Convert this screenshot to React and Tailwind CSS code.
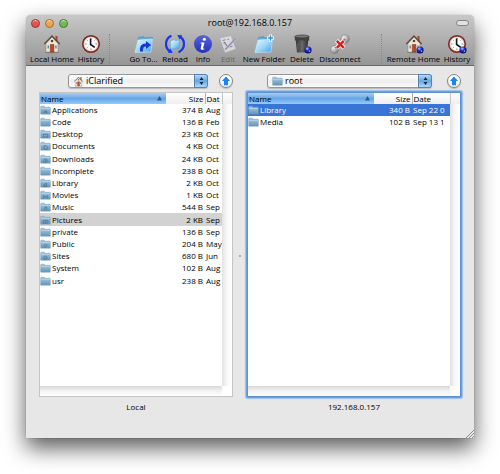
import { clsx } from 'clsx';

const localFiles = [
    { name: 'Applications', size: '374 B', date: 'Aug', glyph: 'apps' },
    { name: 'Code', size: '136 B', date: 'Feb' },
    { name: 'Desktop', size: '23 KB', date: 'Oct', glyph: 'desktop' },
    { name: 'Documents', size: '4 KB', date: 'Oct', glyph: 'doc' },
    { name: 'Downloads', size: '24 KB', date: 'Oct', glyph: 'down' },
    { name: 'Incomplete', size: '238 B', date: 'Oct' },
    { name: 'Library', size: '2 KB', date: 'Oct', glyph: 'library' },
    { name: 'Movies', size: '1 KB', date: 'Oct', glyph: 'film' },
    { name: 'Music', size: '544 B', date: 'Sep', glyph: 'music' },
    { name: 'Pictures', size: '2 KB', date: 'Sep', glyph: 'camera', selected: true },
    { name: 'private', size: '136 B', date: 'Sep' },
    { name: 'Public', size: '204 B', date: 'May', glyph: 'public' },
    { name: 'Sites', size: '680 B', date: 'Jun', glyph: 'compass' },
    { name: 'System', size: '102 B', date: 'Aug' },
    { name: 'usr', size: '238 B', date: 'Aug' },
];

const remoteFiles = [
    { name: 'Library', size: '340 B', date: 'Sep 22 0', selected: true },
    { name: 'Media', size: '102 B', date: 'Sep 13 1' },
];

const glyphs = {
    apps: <path d="M6 11.500 8 7l2 4.500M5 10h6" />,
    desktop: <path d="M5 7.500h6v4H5z" />,
    doc: <path d="M6 6.500h3l1.500 1.500v4H6z" />,
    down: <><circle cx="8" cy="9.500" r="2.500" /><path d="M8 8v3" /></>,
    library: <path d="M5.500 12V8M7.500 12V7M9.500 12V7M5 12h6" />,
    film: <path d="M5.500 7v5M10.500 7v5M5.500 9.500h5" />,
    music: <path d="M7 11.500V7l3 .5v3.500" />,
    camera: <><path d="M4.500 7.500h7v4h-7z" /><circle cx="8" cy="9.500" r="1" /></>,
    public: <path d="M8 7l2.500 2.500L8 12 5.500 9.500z" />,
    compass: <><circle cx="8" cy="9.500" r="2.500" /><path d="M7 10.500l2-2" /></>,
};

const Gradients = () => (
    <svg className="absolute h-0 w-0" aria-hidden="true">
        <defs>
            <linearGradient id="folder" x1="0" y1="0" x2="0" y2="1">
                <stop offset="0" stopColor="#a5c9df" />
                <stop offset="1" stopColor="#6796b8" />
            </linearGradient>
            <linearGradient id="sky" x1="0" y1="0" x2="1" y2="1">
                <stop offset="0" stopColor="#e6f8ff" />
                <stop offset="0.5" stopColor="#a0d9f8" />
                <stop offset="1" stopColor="#3b9ce8" />
            </linearGradient>
            <linearGradient id="info" x1="0" y1="0" x2="0" y2="1">
                <stop offset="0" stopColor="#5964d8" />
                <stop offset="1" stopColor="#2430bd" />
            </linearGradient>
            <linearGradient id="can" x1="0" y1="0" x2="1" y2="0">
                <stop offset="0" stopColor="#343434" />
                <stop offset="0.5" stopColor="#666" />
                <stop offset="1" stopColor="#303030" />
            </linearGradient>
            <radialGradient id="steel" cx="0.35" cy="0.3" r="0.8">
                <stop offset="0" stopColor="#f0f0f0" />
                <stop offset="1" stopColor="#777" />
            </radialGradient>
            <radialGradient id="globe" cx="0.4" cy="0.3" r="0.7">
                <stop offset="0" stopColor="#788cff" />
                <stop offset="0.5" stopColor="#1825b0" />
                <stop offset="1" stopColor="#070c60" />
            </radialGradient>
        </defs>
    </svg>
);

const FolderIcon = ({ glyph, className }) => (
    <svg viewBox="0 0 16 14" className={className} aria-hidden="true">
        <path d="M1 2.500q0-1 1-1h4l1.500 1.500H14q1 0 1 1V13H1z" fill="url(#folder)" stroke="#6d98b5" strokeWidth="0.7" />
        <path d="M1 5h14" stroke="#c2dceb" strokeWidth="1" />
        <g fill="none" stroke="#43749a" strokeWidth="1">{glyph && glyphs[glyph]}</g>
    </svg>
);

const Globe = () => (
    <>
        <circle cx="16" cy="16" r="3.600" fill="url(#globe)" />
        <path d="M14 14.500l2-1 .5 1.500-1.500 1zM16.500 17l1.500-1 .3 1.200-1 1z" fill="#8ca4fa" />
    </>
);

const House = () => (
    <>
        <ellipse cx="10" cy="18.300" rx="7" ry="1" fill="#555" opacity="0.45" />
        <path d="M13.500 2h2v6h-2z" fill="#a8452b" />
        <path d="M4 9.500 10 3l6 6.500V18H4z" fill="#eee6d8" stroke="#8a7a68" strokeWidth="0.5" />
        <path d="M2.300 10 10 2l7.700 8" fill="none" stroke="#5c4a3f" strokeWidth="1.300" />
        <circle cx="10" cy="7" r="1.300" fill="#634131" />
        <path d="M8.300 10.500h3.600V18H8.300z" fill="#c5491d" stroke="#6b2c16" strokeWidth="0.5" />
        <path d="M5.500 11.500h1.500v3H5.500zM13.200 11.500h1.500v3h-1.500z" fill="#7189a0" />
    </>
);

const Clock = () => (
    <>
        <circle cx="10" cy="10" r="8.200" fill="#fafafa" stroke="#7c2b20" strokeWidth="1.700" />
        <circle cx="10" cy="10" r="7" fill="none" stroke="#d8a99d" strokeWidth="0.5" />
        <path d="M10 4v1.500M16 10h-1.500M10 16v-1.500M4 10h1.500M14.200 5.800l-.8.8M5.800 5.800l.8.8M5.800 14.200l.8-.8" stroke="#555" strokeWidth="0.7" />
        <path d="M9.600 4.500v6l4.200 2.800" fill="none" stroke="#151515" strokeWidth="1.600" />
    </>
);

const BlueFolder = () => (
    <>
        <path d="M2.500 18 4.500 3.500l5-1 1 1.500 8-.5-1.500 14z" fill="#5baee3" stroke="#397fb2" strokeWidth="0.5" />
        <path d="M1 18.500 4 6l14.500-1-1.500 13z" fill="url(#sky)" stroke="#bdeaff" strokeWidth="0.700" />
    </>
);

const toolIcons = {
    home: <House />,
    history: <Clock />,
    goto: (
        <>
            <BlueFolder />
            <path d="M6 17.500q-1-8 6-8V7l5 4-5 4v-2.500q-3.500 0-3 5z" fill="#1539d0" />
        </>
    ),
    reload: (
        <>
            <path d="M5.500 7l4-1.500.8 1 4.500-.5-1 8.500-8.500.5z" fill="url(#sky)" stroke="#579ccc" strokeWidth="0.500" />
            <path d="M6.500 1.800A8.800 8.800 0 0 0 5 17.300M13.500 18.200A8.800 8.800 0 0 0 15 2.700" fill="none" stroke="#1637ef" strokeWidth="2.300" />
            <path d="M2.800 18.800l5 .2-2.500-4.500zM17.200 1.200l-5-.2 2.500 4.500z" fill="#1637ef" />
        </>
    ),
    info: (
        <>
            <circle cx="10" cy="10" r="9" fill="url(#info)" />
            <circle cx="11.300" cy="5.200" r="1.500" fill="#fff" />
            <path d="M7.700 8.500h3.800l-1.400 5.500q0 1 1.500.4l-.2.8q-4 1.700-3.700-1l1.100-4.700H7.600z" fill="#fff" />
        </>
    ),
    edit: (
        <g opacity="0.7">
            <path d="M1.500 4 13 1.500 18 15 7 19z" fill="#ebebf0" stroke="#a6a6ae" strokeWidth="0.600" />
            <path d="M4.500 6.500l3-.7M9.500 5.500l1.500-.3M5.500 9l2-.5M11.500 13l3-.9" stroke="#6f6f98" strokeWidth="1" />
            <path d="M7 14.500 17.500 3l1.500 1.300L8.800 15.500l-2.500 1z" fill="#8c89b0" stroke="#eee" strokeWidth="0.400" />
            <path d="M6 8l3 4" stroke="#66669a" strokeWidth="1.200" />
        </g>
    ),
    newFolder: (
        <>
            <BlueFolder />
            <path d="M16.500 0.500v7M13 4h7" stroke="#fff" strokeWidth="3" />
            <path d="M16.500 1.300v5.400M13.800 4h5.400" stroke="#3a92cf" strokeWidth="1.400" />
        </>
    ),
    trash: (
        <>
            <path d="M3.500 4h13l-1.500 14.500H5z" fill="url(#can)" />
            <path d="M2.800 2.500h14.400v4H2.800z" fill="#424242" />
            <ellipse cx="10" cy="2.500" rx="7.200" ry="1.500" fill="#777" stroke="#333" strokeWidth="0.600" />
            <path d="M6 9v7M10 9v7" stroke="#737373" strokeWidth="0.600" />
            <Globe />
        </>
    ),
    disconnect: (
        <>
            <circle cx="15" cy="5" r="4.300" fill="url(#steel)" stroke="#777" strokeWidth="0.500" />
            <circle cx="4.500" cy="15.500" r="4" fill="url(#steel)" stroke="#777" strokeWidth="0.500" />
            <path d="M5 14l2-2M13 7l2-2" stroke="#777" strokeWidth="1.400" />
            <path d="M6.500 6.500l7.500 7.500M14 6.500 6.500 14" stroke="#fff" strokeWidth="4.200" />
            <path d="M6.800 6.800l7 7M13.800 6.800l-7 7" stroke="#d91c20" strokeWidth="2.500" />
        </>
    ),
    remoteHome: <><House /><Globe /></>,
    remoteHistory: <><Clock /><Globe /></>,
};

const Tool = ({ icon, label, width, disabled }) => (
    <button
        type="button"
        disabled={disabled}
        className={clsx('flex shrink-0 flex-col items-center whitespace-nowrap', width, disabled && 'text-[#686868]')}
    >
        <svg viewBox="0 0 20 20" className="h-5 w-5" aria-hidden="true">{toolIcons[icon]}</svg>
        <span className="text-[8px] leading-[10px]">{label}</span>
    </button>
);

const Separator = () => <span className="h-[30px] border-l border-dotted border-[#858585]" />;

const Light = ({ label, color }) => (
    <button
        type="button"
        aria-label={label}
        className={clsx('h-[9px] w-[9px] rounded-full border shadow-[inset_0_2px_1px_-1px_rgba(255,255,255,0.8)]', color)}
    />
);

const LocationBar = ({ value, label, icon, className }) => (
    <div className={clsx('flex h-[14px] items-stretch', className)}>
        <div className="relative flex min-w-0 flex-1">
            <select
                aria-label={label}
                className="w-full appearance-none rounded-[3px] border border-[#969696] bg-linear-to-b from-white via-[#eeeeee] to-[#fafafa] pl-[17px] text-[9px] leading-[12px] text-black shadow-[0_1px_1px_rgba(0,0,0,0.2)]"
            >
                <option>{value}</option>
            </select>
            <span className="pointer-events-none absolute inset-y-0 left-[5px] flex items-center">{icon}</span>
            <span className="pointer-events-none absolute inset-y-0 right-0 flex w-[14px] items-center justify-center rounded-r-[3px] border border-[#5382b5] bg-linear-to-b from-[#b8d7f5] via-[#65a6e3] to-[#acdafb]">
                <svg viewBox="0 0 6 10" className="h-2 w-[5px]" aria-hidden="true">
                    <path d="M3 0l2.500 3.700h-5zM3 10 .5 6.300h5z" fill="#15273d" />
                </svg>
            </span>
        </div>
        <button
            type="button"
            aria-label="Parent folder"
            className="flex w-[14px] shrink-0 items-center justify-center rounded-full border border-[#858585] bg-linear-to-b from-white to-[#f0f0f0] shadow-[0_1px_1px_rgba(0,0,0,0.2)]"
        >
            <svg viewBox="0 0 10 10" className="h-[10px] w-[10px]" aria-hidden="true">
                <path d="M5 .5 9 5H7v4.300H3V5H1z" fill="#1685fa" />
            </svg>
        </button>
    </div>
);

const FileList = ({ files, dateLabel, focused }) => (
    <div
        className={clsx(
            'flex min-h-0 flex-1 flex-col border bg-white',
            focused ? 'rounded-[1px] border-[#5b93d6] shadow-[0_0_0_1px_#6b9fdd,0_0_1px_2px_#9dbfe8]' : 'border-[#c4c4c4]'
        )}
    >
        <div className="flex flex-1">
            <div className="min-w-0 flex-1">
                <table className="w-full table-fixed text-left text-[8px] leading-[10px] whitespace-nowrap">
                    <colgroup>
                        <col />
                        <col className={focused ? 'w-[38px]' : 'w-[39px]'} />
                        <col className={focused ? 'w-[38px]' : 'w-[17px]'} />
                    </colgroup>
                    <thead>
                        <tr className="h-[11px]">
                            <th className="bg-linear-to-b from-[#a9cdf2] via-[#66a6e6] to-[#94caf8] p-0 pl-px font-medium">
                                <span className="flex items-center justify-between pr-1">
                                    Name
                                    <svg viewBox="0 0 6 6" className="h-[5px] w-[5px]" aria-hidden="true">
                                        <path d="M3 0l3 5.500H0z" fill="#355881" />
                                    </svg>
                                </span>
                            </th>
                            <th className="border-r border-[#b5b5b5] bg-linear-to-b from-white to-[#eeeeee] p-0 pr-px text-right font-medium">Size</th>
                            <th className="bg-linear-to-b from-white to-[#eeeeee] p-0 pl-px font-medium">{dateLabel}</th>
                        </tr>
                    </thead>
                    <tbody>
                        {files.map((file) => (
                            <tr
                                key={file.name}
                                className={clsx(
                                    'h-3 nth-[5n]:h-[13px]',
                                    file.selected && (focused ? 'bg-[#3875d7] text-white' : 'bg-[#d2d2d2]')
                                )}
                            >
                                <td className="p-0">
                                    <span className="flex items-center gap-px">
                                        <FolderIcon glyph={file.glyph} className="h-[10px] w-[11px]" />
                                        {file.name}
                                    </span>
                                </td>
                                <td className="p-0 pr-[2px] text-right">{file.size}</td>
                                <td className="p-0 pl-px">{file.date}</td>
                            </tr>
                        ))}
                    </tbody>
                </table>
            </div>
            <div className="flex w-[10px] flex-col">
                <div className="h-[11px] border-l border-[#c4c4c4] bg-linear-to-b from-white to-[#eeeeee]" />
                <div className="flex-1 bg-linear-to-r from-[#e2e2e2] via-[#f8f8f8] to-white" />
            </div>
        </div>
        <div className="mr-[10px] h-[10px] bg-linear-to-b from-[#d8d8d8] via-[#f2f2f2] to-white" />
    </div>
);

export default function App() {
    return (
        <div className="flex min-h-screen flex-col bg-white px-[26px] pt-[15px] pb-9 font-['Open_Sans','Noto_Sans',sans-serif] text-black">
            <Gradients />
            <main className="flex flex-1 flex-col rounded-t-[5px] bg-[#e7e7e7] shadow-[0_0_1px_rgba(0,0,0,0.5),0_10px_22px_rgba(0,0,0,0.65)]">
                <header className="rounded-t-[5px] border-b border-[#686868] bg-linear-to-b from-[#c8c8c8] to-[#969696]">
                    <div className="grid h-4 grid-cols-[1fr_auto_1fr] items-center px-[5px]">
                        <div className="flex items-center gap-[5px]">
                            <Light label="Close" color="border-[#983535] bg-[#e94d4d]" />
                            <Light label="Minimize" color="border-[#a36a2d] bg-[#f2a444]" />
                            <Light label="Zoom" color="border-[#457b31] bg-[#72b94f]" />
                        </div>
                        <h1 className="text-[9px] leading-3">root@192.168.0.157</h1>
                        <button
                            type="button"
                            aria-label="Toggle toolbar"
                            className="h-[6px] w-[13px] justify-self-end rounded-full border border-[#858585] bg-[#e2e2e2]"
                        />
                    </div>
                    <div className="flex h-[34px] items-start px-1 pt-[3px]">
                        <div className="flex gap-1">
                            <Tool icon="home" label="Local Home" width="w-11" />
                            <Tool icon="history" label="History" width="w-[26px]" />
                        </div>
                        <div className="mx-[5px] flex flex-1 justify-between">
                            <Separator />
                            <div className="flex gap-[5px]">
                                <Tool icon="goto" label="Go To..." width="w-[27px]" />
                                <Tool icon="reload" label="Reload" width="w-[26px]" />
                                <Tool icon="info" label="Info" width="w-5" />
                                <Tool icon="edit" label="Edit" width="w-5" disabled />
                                <Tool icon="newFolder" label="New Folder" width="w-[42px]" />
                                <Tool icon="trash" label="Delete" width="w-6" />
                                <Tool icon="disconnect" label="Disconnect" width="w-[42px]" />
                            </div>
                            <Separator />
                        </div>
                        <div className="flex gap-1">
                            <Tool icon="remoteHome" label="Remote Home" width="w-[53px]" />
                            <Tool icon="remoteHistory" label="History" width="w-[26px]" />
                        </div>
                    </div>
                </header>

                <div className="grid flex-1 grid-cols-[194fr_14px_214fr] px-[13px] pt-2">
                    <section className="flex min-w-0 flex-col gap-1">
                        <LocationBar
                            value="iClarified"
                            label="Local folder"
                            icon={<svg viewBox="0 0 20 20" className="h-[11px] w-[11px]" aria-hidden="true"><House /></svg>}
                            className="gap-[11px] pl-[29px]"
                        />
                        <FileList files={localFiles} dateLabel="Dat" />
                        <p className="h-[37px] text-center text-[8px] leading-3">Local</p>
                    </section>
                    <div className="flex items-center justify-center">
                        <span className="h-[2px] w-[2px] rounded-full bg-[#999]" />
                    </div>
                    <section className="flex min-w-0 flex-col gap-1">
                        <LocationBar
                            value="root"
                            label="Remote folder"
                            icon={<FolderIcon className="h-[10px] w-[11px]" />}
                            className="gap-[15px] pl-5"
                        />
                        <FileList files={remoteFiles} dateLabel="Date" focused />
                        <p className="h-[37px] text-center text-[8px] leading-3">192.168.0.157</p>
                    </section>
                </div>
                <svg viewBox="0 0 8 8" className="-mt-2 h-2 w-2 self-end" aria-hidden="true">
                    <path d="M0 8l8-8M3 8l5-5M6 8l2-2" stroke="#8c8c8c" strokeWidth="1" />
                </svg>
            </main>
        </div>
    );
}
